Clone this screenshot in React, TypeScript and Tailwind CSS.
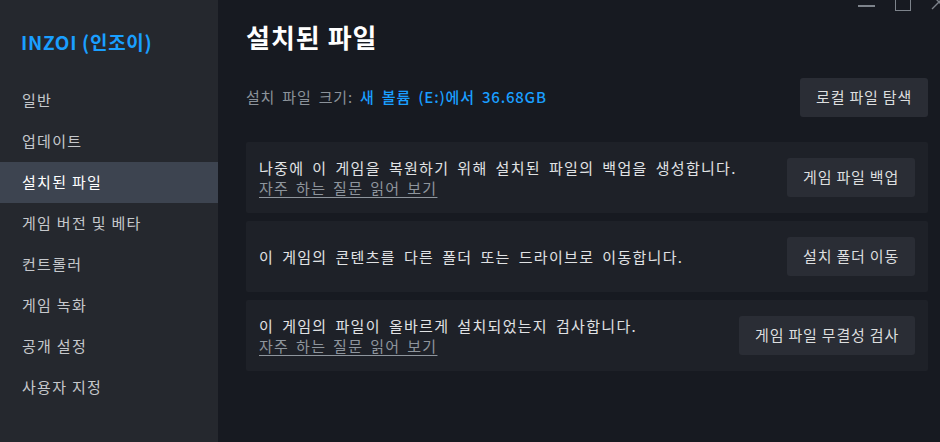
import React from "react";

const font = { fontFamily: '"Noto Sans CJK KR", "Noto Sans", sans-serif' };

const navItems = [
  "일반",
  "업데이트",
  "설치된 파일",
  "게임 버전 및 베타",
  "컨트롤러",
  "게임 녹화",
  "공개 설정",
  "사용자 지정",
];

function Btn({ children }: { children: React.ReactNode }) {
  return (
    <button className="h-[39px] px-4 rounded-[3px] bg-[#2a2d35] text-[#dcdedf] text-[15px] [letter-spacing:0.8px] whitespace-nowrap">
      {children}
    </button>
  );
}

function Card({
  text,
  link,
  button,
}: {
  text: string;
  link?: boolean;
  button: string;
}) {
  return (
    <div className="h-[71px] bg-[#1e2128] rounded-[2px] flex items-center justify-between pl-[13px] pr-[13px]">
      <div className="flex flex-col">
        <div className="text-[15px] leading-[21px] text-[#e0e2e4] [letter-spacing:1.3px] [word-spacing:3.4px]">
          {text}
        </div>
        {link && (
          <div className="text-[15px] leading-[20px] text-[#8e959d] underline underline-offset-[3px] [letter-spacing:1.3px] [word-spacing:2.2px]">
            자주 하는 질문 읽어 보기
          </div>
        )}
      </div>
      <Btn>{button}</Btn>
    </div>
  );
}

export default function App() {
  return (
    <div
      style={font}
      className="relative w-[940px] h-[442px] overflow-hidden flex bg-[#171a21]"
    >
      <aside className="w-[218px] shrink-0 bg-[#25282e] flex flex-col">
        <div className="h-[80px] pl-[21px] pt-[28px]">
          <div className="text-[19px] font-bold text-[#1a9fff] leading-[28px] [letter-spacing:0.7px]">
            INZOI (인조이)
          </div>
        </div>
        {navItems.map((n) => {
          const sel = n === "설치된 파일";
          return (
            <div
              key={n}
              className={
                sel
                  ? "h-[41px] flex items-center pl-[22px] bg-[#3d4450] text-white text-[15px]"
                  : "h-[41px] flex items-center pl-[22px] text-[#c5c8cc] text-[15px]"
              }
            >
              <span className="[letter-spacing:1.3px]">{n}</span>
            </div>
          );
        })}
      </aside>

      <main className="flex-1 pl-[28px] pr-[12px] flex flex-col">
        <h1 className="mt-[18px] h-[38px] text-[26px] leading-[38px] font-bold text-white [letter-spacing:1px]">
          설치된 파일
        </h1>
        <div className="mt-[22px] h-[39px] flex items-center justify-between">
          <div className="text-[15px] text-[#8b929a] [letter-spacing:0.8px] [word-spacing:3px]">
            설치 파일 크기:{" "}
            <span className="text-[#1a9fff] font-medium">
              새 볼륨 (E:)에서 36.68GB
            </span>
          </div>
          <Btn>로컬 파일 탐색</Btn>
        </div>
        <div className="mt-[25px] flex flex-col gap-[8px]">
          <Card
            text="나중에 이 게임을 복원하기 위해 설치된 파일의 백업을 생성합니다."
            link
            button="게임 파일 백업"
          />
          <Card
            text="이 게임의 콘텐츠를 다른 폴더 또는 드라이브로 이동합니다."
            button="설치 폴더 이동"
          />
          <Card
            text="이 게임의 파일이 올바르게 설치되었는지 검사합니다."
            link
            button="게임 파일 무결성 검사"
          />
        </div>
      </main>

      <div className="absolute top-0 right-0 w-[90px] h-[14px]">
        <div className="absolute left-[8px] top-[5px] w-[17px] h-[1.5px] bg-[#7d838b]" />
        <div className="absolute left-[45px] top-[-5px] w-[16px] h-[16px] border-[1.5px] border-[#7d838b]" />
        <svg
          className="absolute left-[81px] top-[-6px]"
          width="16"
          height="16"
          viewBox="0 0 16 16"
        >
          <path d="M1 1 L15 15 M15 1 L1 15" stroke="#7d838b" strokeWidth="1.4" />
        </svg>
      </div>
    </div>
  );
}
